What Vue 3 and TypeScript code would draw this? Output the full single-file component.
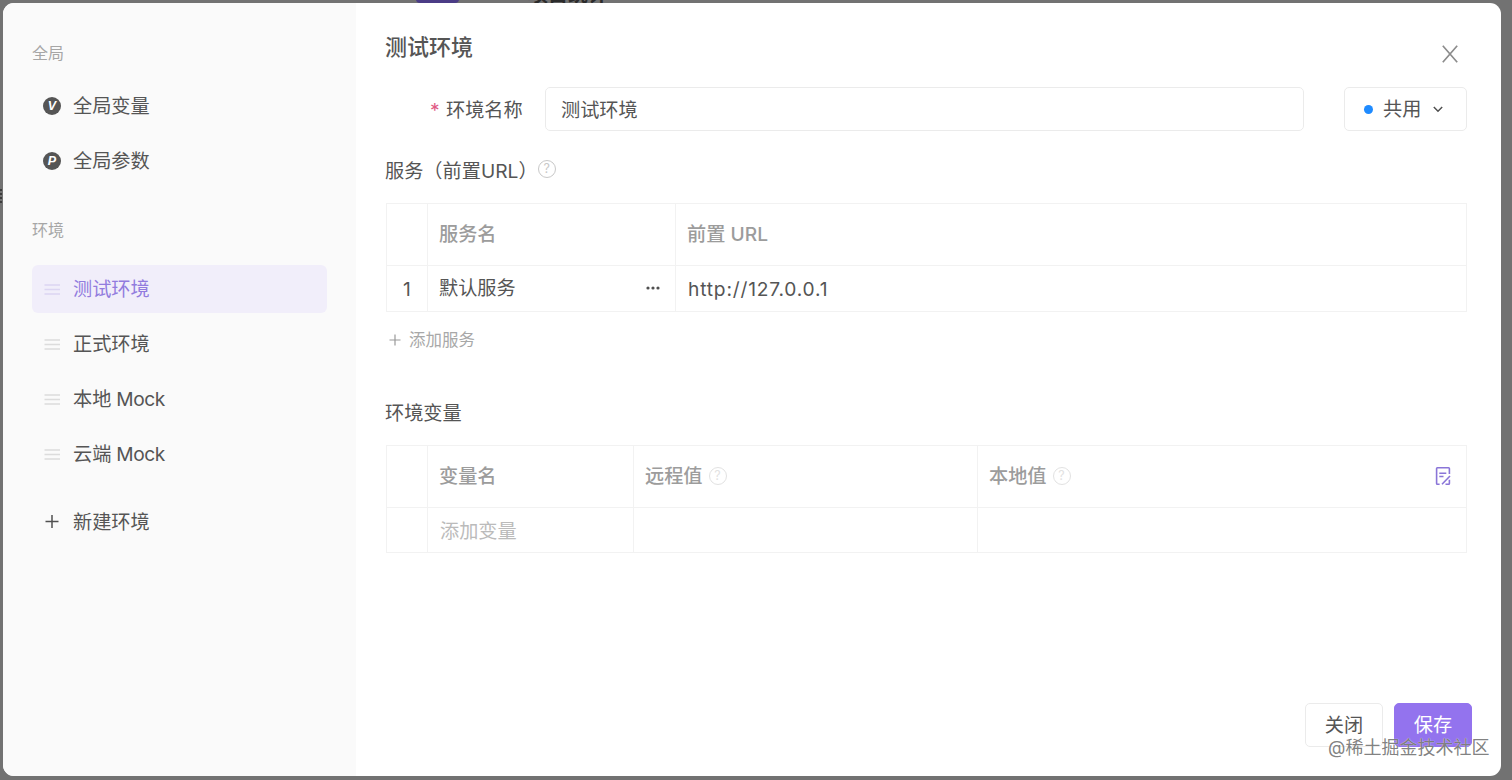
<script setup lang="ts">
interface NavItem {
  label: string
  latin?: string
  glyph?: string
}

const globals: NavItem[] = [
  { label: '全局变量', glyph: 'V' },
  { label: '全局参数', glyph: 'P' },
]
const environments: NavItem[] = [
  { label: '测试环境' },
  { label: '正式环境' },
  { label: '本地', latin: 'Mock' },
  { label: '云端', latin: 'Mock' },
]
const active = '测试环境'
</script>

<template>
  <div class="page">
    <div class="backdrop-tile"></div>
    <div class="backdrop-title">项目统计</div>
    <div class="backdrop-mark"><i></i><i></i><i></i><i></i></div>

    <div class="modal">
      <aside class="side">
        <div class="group">全局</div>
        <div v-for="item in globals" :key="item.label" class="item">
          <b class="badge">{{ item.glyph }}</b>
          <span>{{ item.label }}</span>
        </div>
        <div class="group env">环境</div>
        <div v-for="item in environments" :key="item.label" class="item" :class="{ active: item.label === active }">
          <svg class="drag" width="18" height="18" viewBox="0 0 18 18">
            <path d="M1.5 5h15.5M1.5 9.5h15.5M1.5 14h15.5" fill="none" stroke="currentColor" stroke-width="1.3" />
          </svg>
          <span>{{ item.label }}<span v-if="item.latin" class="latin">&nbsp;{{ item.latin }}</span></span>
        </div>
        <div class="item create">
          <svg width="18" height="18" viewBox="0 0 18 18">
            <path d="M2.5 9.5h13M9 3v13" fill="none" stroke="#505050" stroke-width="1.5" />
          </svg>
          <span>新建环境</span>
        </div>
      </aside>

      <main class="main">
        <h1 class="title">测试环境</h1>
        <div class="form">
          <label class="label"><span class="star">*</span>环境名称</label>
          <div class="input">测试环境</div>
          <div class="select">
            <i class="dot"></i>
            <span>共用</span>
            <svg width="12" height="12" viewBox="0 0 12 12">
              <path d="m1.8 4 4.2 4.2L10.2 4" fill="none" stroke="#505050" stroke-width="1.5" />
            </svg>
          </div>
        </div>

        <div class="section">
          <span>服务（前置URL）</span>
          <i class="help">?</i>
        </div>
        <div class="table services">
          <div class="cell head"></div>
          <div class="cell head">服务名</div>
          <div class="cell head">前置 URL</div>
          <div class="cell index">1</div>
          <div class="cell name">
            <span>默认服务</span>
            <svg width="14" height="4" viewBox="0 0 14 4" fill="#505050">
              <circle cx="2" cy="2" r="1.6" /><circle cx="7" cy="2" r="1.6" /><circle cx="12" cy="2" r="1.6" />
            </svg>
          </div>
          <div class="cell url">http://127.0.0.1</div>
        </div>
        <div class="add">
          <svg width="14" height="14" viewBox="0 0 14 14">
            <path d="M1.5 7h11M7 1.5v11" fill="none" stroke="#999" stroke-width="1.2" />
          </svg>
          <span>添加服务</span>
        </div>

        <div class="section vars">环境变量</div>
        <div class="table variables">
          <div class="cell head"></div>
          <div class="cell head">变量名</div>
          <div v-for="name in ['远程值', '本地值']" :key="name" class="cell head">
            <span>{{ name }}</span>
            <i class="help pale">?</i>
            <svg v-if="name === '本地值'" class="edit" width="16" height="20" viewBox="0 0 16 20">
              <path d="M4.6 18.2H2.4Q1.6 18.2 1.6 17.4V2.6Q1.6 1.8 2.4 1.8H13.6Q14.4 1.8 14.4 2.6V8M4.3 7.2h7M4.3 10.5h4.2M7 18.2 15 10M10.5 18.2h3.1Q14.4 18.2 14.4 17.4V13.8" fill="none" stroke="#8a75d8" stroke-width="1.6" />
            </svg>
          </div>
          <div class="cell"></div>
          <div class="cell placeholder">添加变量</div>
          <div class="cell"></div>
          <div class="cell"></div>
        </div>

        <div class="footer">
          <button class="btn">关闭</button>
          <button class="btn primary">保存</button>
        </div>
      </main>

      <button class="close" aria-label="关闭">
        <svg width="18" height="18" viewBox="0 0 18 18">
          <path d="m1.8 .8 14.4 16.4M16.2 .8 1.8 17.2" fill="none" stroke="#8c8c8c" stroke-width="1.7" />
        </svg>
      </button>
    </div>
    <div class="watermark">@稀土掘金技术社区</div>
  </div>
</template>

<style>
body {
  margin: 0;
  overflow: hidden;
}
</style>

<style scoped>
* {
  box-sizing: border-box;
}
svg {
  display: block;
  flex: none;
}
.page {
  position: relative;
  width: 1512px;
  height: 780px;
  padding: 3px 11px 4px 3px;
  overflow: hidden;
  background: #727272;
  color: #555;
  font: 19.2px/28px Inter, 'Noto Sans CJK SC', sans-serif;
}
.backdrop-tile {
  position: absolute;
  left: 416px;
  top: -20px;
  width: 43px;
  height: 23px;
  border-radius: 4px;
  background: #4b3c86;
}
.backdrop-title {
  position: absolute;
  left: 528px;
  top: -19px;
  font-size: 20px;
  line-height: 28px;
  font-weight: 700;
  color: #2b2b2b;
}
.backdrop-mark {
  position: absolute;
  left: 0;
  top: 189px;
  display: grid;
  gap: 2px;
}
.backdrop-mark i {
  width: 2px;
  height: 2px;
  background: #3c3c3c;
}
.modal {
  position: relative;
  display: flex;
  height: 773px;
  border-radius: 11px;
  background: #fff;
  overflow: hidden;
}
.side {
  width: 353px;
  flex: none;
  padding: 36px 29px 0;
  background: #fafafa;
}
.group {
  height: 28px;
  margin-bottom: 15px;
  font-size: 16px;
  color: #a6a6a6;
}
.group.env {
  margin: 31px 0 21px;
}
.item {
  display: flex;
  align-items: center;
  gap: 12px;
  height: 48px;
  margin-bottom: 7px;
  padding-left: 11px;
  border-radius: 6px;
}
.badge {
  width: 18px;
  height: 18px;
  border-radius: 50%;
  background: #555;
  color: #fff;
  font: italic 700 12.5px/18px 'Liberation Sans', sans-serif;
  text-align: center;
}
.latin {
  letter-spacing: -0.45px;
}
.drag {
  color: #dcdcdc;
}
.item.active {
  background: #f1eefa;
  color: #927cde;
}
.active .drag {
  color: #dcd5f2;
}
.create {
  margin-top: 19px;
}
.create span {
  padding-top: 1px;
}
.main {
  flex: 1;
  display: flex;
  flex-direction: column;
  padding: 22px 34px 29px 29px;
}
.title {
  margin: 0;
  height: 44px;
  font-size: 22px;
  line-height: 44px;
  font-weight: 500;
}
.form {
  display: flex;
  margin-top: 18px;
  height: 44px;
}
.label {
  display: flex;
  width: 160px;
  align-items: center;
  padding: 2px 0 0 45px;
}
.star {
  width: 16px;
  color: #e05a84;
}
.input {
  width: 759px;
  padding-left: 15px;
  border: 1px solid #ebebeb;
  border-radius: 5px;
  line-height: 45px;
}
.select {
  display: flex;
  align-items: center;
  width: 123px;
  margin-left: 40px;
  padding-left: 19px;
  border: 1px solid #ebebeb;
  border-radius: 5px;
}
.dot {
  width: 9px;
  height: 9px;
  margin-right: 10px;
  border-radius: 50%;
  background: #1f8bff;
}
.select svg {
  margin-left: 11px;
}
.section {
  display: flex;
  align-items: center;
  height: 30px;
  margin-top: 24px;
}
.section > span {
  padding-top: 2px;
}
.help {
  width: 18px;
  height: 18px;
  margin: -2px 0 0;
  border: 1.5px solid currentColor;
  border-radius: 50%;
  color: #c8c8c8;
  font: normal 400 12.5px/16px Inter, sans-serif;
  text-align: center;
}
.help.pale {
  margin: 1px 0 0 6px;
  color: #e2e2e2;
}
.table {
  display: grid;
  margin: 18px 0 0 1px;
  border: solid #f2f2f2;
  border-width: 0 1px 1px 0;
}
.services {
  grid-template: 62px 46px / 41px 248px 1fr;
}
.variables {
  grid-template: 62px 45px / 41px 206px 344px 1fr;
  margin-top: 17px;
}
.cell {
  display: flex;
  align-items: center;
  padding: 0 11px;
  border: solid #f2f2f2;
  border-width: 1px 0 0 1px;
}
.head {
  padding-bottom: 2px;
  color: #9c9c9c;
  font-weight: 500;
}
.index {
  justify-content: center;
  padding: 0;
}
.name {
  justify-content: space-between;
  padding: 0 15px 2px 11px;
}
.url {
  padding-left: 12px;
  letter-spacing: 0.8px;
}
.edit {
  margin-left: auto;
  margin-right: 4px;
}
.placeholder {
  padding: 2px 0 0 12px;
  color: #bbb;
}
.add {
  display: flex;
  align-items: center;
  gap: 7px;
  height: 28px;
  margin-top: 14px;
  padding-left: 3px;
  color: #a8a8a8;
  font-size: 16.5px;
}
.section.vars {
  margin-top: 44px;
}
.footer {
  display: flex;
  justify-content: flex-end;
  gap: 11px;
  margin: auto -5px 0 0;
}
.btn {
  width: 78px;
  height: 44px;
  padding: 0;
  border: 1px solid #ebebeb;
  border-radius: 5px;
  background: #fff;
  color: #555;
  font: inherit;
}
.btn.primary {
  border-color: #9373ee;
  background: #9373ee;
  color: #fff;
}
.close {
  position: absolute;
  top: 42px;
  right: 42px;
  padding: 0;
  border: 0;
  background: none;
}
.watermark {
  position: absolute;
  left: 1328px;
  top: 734px;
  font-size: 18px;
  line-height: 28px;
  white-space: nowrap;
  color: rgba(95, 95, 95, 0.8);
  text-shadow: 0 0 1px #fff;
}
</style>
